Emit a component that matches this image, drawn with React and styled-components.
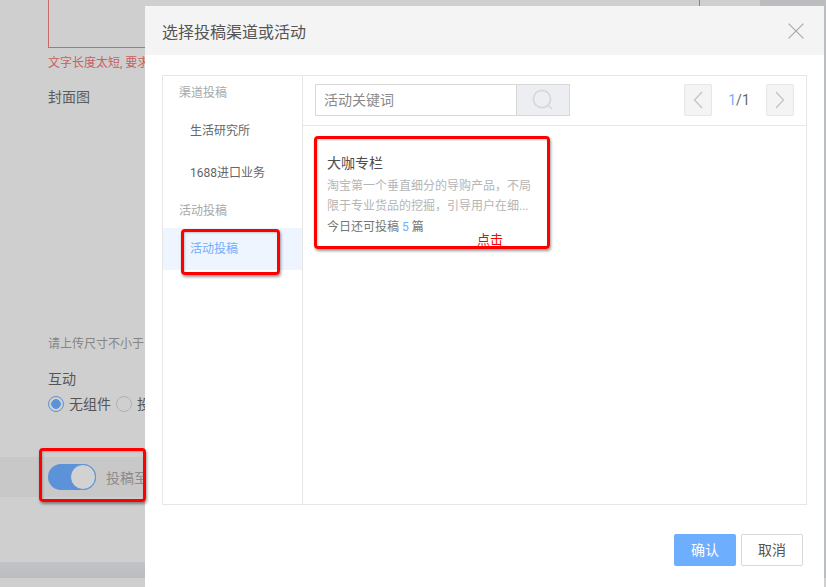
import React from "react";
import styled, { createGlobalStyle } from "styled-components";

const FONT = `Roboto, "Noto Sans CJK SC", sans-serif`;
const BLUE = "#6eaeff";
const RED = "#fe0000";

const Global = createGlobalStyle`
  html, body {
    margin: 0;
    padding: 0;
    height: 100%;
    overflow: hidden;
    font-family: ${FONT};
  }
`;

function Search() {
  return (
    <svg width="24" height="24" viewBox="0 0 24 24" fill="none" stroke="#d6d7d9" strokeWidth="1.6">
      <circle cx="11" cy="11" r="8.6" />
      <path d="M17.5 17.5 L21 21" />
    </svg>
  );
}

function Chevron({ dir }) {
  return (
    <svg width="10" height="18" viewBox="0 0 10 18" fill="none" stroke="#c4c4c4" strokeWidth="1.3">
      <path d={dir === "left" ? "M9 1 L1.5 9 L9 17" : "M1 1 L8.5 9 L1 17"} />
    </svg>
  );
}

export default function App() {
  return (
    <>
      <Global />
      <Page>
        <Back>
          <ErrorBox />
          <ErrorText>文字长度太短, 要求</ErrorText>
          <FieldLabel>封面图</FieldLabel>
          <Hint>请上传尺寸不小于</Hint>
          <GroupLabel>互动</GroupLabel>
          <RadioRow>
            <Radio $on />
            <RadioText>无组件</RadioText>
            <Radio />
            <RadioText>投票</RadioText>
          </RadioRow>
          <SwitchBand>
            <Switch>
              <Knob />
            </Switch>
            <SwitchText>投稿至</SwitchText>
          </SwitchBand>
        </Back>
        <FooterBand />
        <SideStrip />

        <Modal>
          <ModalHeader>
            <ModalTitle>选择投稿渠道或活动</ModalTitle>
            <Close>
              <svg width="16" height="16" viewBox="0 0 16 16" stroke="#a9a9a9" strokeWidth="1.2">
                <path d="M.6.6 15.4 15.4M15.4.6.6 15.4" />
              </svg>
            </Close>
          </ModalHeader>
          <Panel>
            <Sidebar>
              <SideGroup>渠道投稿</SideGroup>
              <SideItem>生活研究所</SideItem>
              <SideItem>1688进口业务</SideItem>
              <SideGroup>活动投稿</SideGroup>
              <SideItem $active>活动投稿</SideItem>
            </Sidebar>
            <Main>
              <Toolbar>
                <SearchField>
                  <SearchInput>活动关键词</SearchInput>
                  <SearchButton>
                    <Search />
                  </SearchButton>
                </SearchField>
                <Pager>
                  <PageButton>
                    <Chevron dir="left" />
                  </PageButton>
                  <PageCount>
                    <b>1</b>/1
                  </PageCount>
                  <PageButton>
                    <Chevron dir="right" />
                  </PageButton>
                </Pager>
              </Toolbar>
              <CardList>
                <Card>
                  <CardTitle>大咖专栏</CardTitle>
                  <CardDesc>淘宝第一个垂直细分的导购产品，不局限于专业货品的挖掘，引导用户在细...</CardDesc>
                  <CardQuota>
                    今日还可投稿 <b>5</b> 篇
                  </CardQuota>
                </Card>
              </CardList>
            </Main>
          </Panel>
          <ModalFooter>
            <Confirm>确认</Confirm>
            <Cancel>取消</Cancel>
          </ModalFooter>
        </Modal>

        <Mark $x={181} $y={229} $w={99} $h={46} />
        <Mark $x={314} $y={136} $w={236} $h={113} />
        <Mark $x={39} $y={448} $w={107} $h={54} />
        <ClickNote>点击</ClickNote>
      </Page>
    </>
  );
}

const Page = styled.div`
  position: relative;
  width: 826px;
  height: 587px;
  overflow: hidden;
  background: #cfcfcf;
`;

const Back = styled.div`
  display: flex;
  flex-direction: column;
  align-items: flex-start;
  padding-left: 48px;
  white-space: nowrap;
`;

const ErrorBox = styled.div`
  box-sizing: border-box;
  width: 652px;
  height: 48px;
  border: 1px solid #c76a6a;
  border-top: none;
`;

const ErrorText = styled.div`
  margin-top: 7px;
  font-size: 12px;
  line-height: 16px;
  color: #c96060;
`;

const FieldLabel = styled.div`
  margin-top: 16px;
  font-size: 14px;
  line-height: 20px;
  color: #5c5c5c;
`;

const Hint = styled.div`
  margin-top: 229px;
  font-size: 12px;
  line-height: 16px;
  color: #858585;
`;

const GroupLabel = styled.div`
  margin-top: 17px;
  font-size: 14px;
  line-height: 20px;
  color: #555;
`;

const RadioRow = styled.div`
  display: flex;
  align-items: center;
  margin-top: 5px;
`;

const Radio = styled.span`
  box-sizing: border-box;
  width: 16px;
  height: 16px;
  border-radius: 50%;
  border: 1px solid ${({ $on }) => ($on ? "#5b92d8" : "#b0b0b0")};
  background: ${({ $on }) => ($on ? "radial-gradient(circle, #5b92d8 0 4.5px, transparent 5px)" : "transparent")};
`;

const RadioText = styled.span`
  margin: 0 5px;
  font-size: 14px;
  line-height: 20px;
  color: #555;
`;

const SwitchBand = styled.div`
  display: flex;
  align-items: center;
  align-self: stretch;
  box-sizing: border-box;
  margin: 43px 0 0 -48px;
  padding-left: 48px;
  height: 40px;
  background: #c8c8c8;
`;

const Switch = styled.div`
  display: flex;
  justify-content: flex-end;
  box-sizing: border-box;
  width: 48px;
  height: 26px;
  border-radius: 13px;
  background: #5b92d8;
`;

const Knob = styled.span`
  box-sizing: border-box;
  width: 26px;
  height: 26px;
  border-radius: 50%;
  border: 1px solid #5b92d8;
  background: #d2d2d2;
`;

const SwitchText = styled.span`
  margin-left: 10px;
  font-size: 14px;
  color: #8c8c8c;
`;

const FooterBand = styled.div`
  position: absolute;
  left: 0;
  right: 0;
  top: 562px;
  height: 16px;
  background: linear-gradient(#c2c3c7, #bcbdc1);
`;

const SideStrip = styled.div`
  position: absolute;
  top: 0;
  bottom: 9px;
  right: 0;
  width: 66px;
  background: #bcbdc1;
`;

const Modal = styled.div`
  position: absolute;
  left: 145px;
  top: 6px;
  width: 679px;
  height: 590px;
  display: flex;
  flex-direction: column;
  background: #fff;
  border-radius: 2px;
`;

const ModalHeader = styled.div`
  display: flex;
  align-items: center;
  justify-content: space-between;
  flex: none;
  height: 49px;
  padding: 0 20px 0 17px;
  background: #f4f4f4;
`;

const ModalTitle = styled.div`
  font-size: 16px;
  color: #555;
`;

const Close = styled.div`
  display: flex;
`;

const Panel = styled.div`
  display: flex;
  flex: none;
  box-sizing: border-box;
  width: 645px;
  height: 430px;
  margin: 20px 0 0 17px;
  border: 1px solid #e6e6e6;
`;

const Sidebar = styled.div`
  display: flex;
  flex-direction: column;
  flex: none;
  width: 139px;
  border-right: 1px solid #e6e6e6;
  font-size: 12px;
`;

const SideGroup = styled.div`
  box-sizing: border-box;
  height: 34px;
  padding: 1px 0 0 16px;
  line-height: 33px;
  color: #a8a8a8;
`;

const SideItem = styled.div`
  box-sizing: border-box;
  height: 42px;
  padding: 1px 0 0 27px;
  line-height: 41px;
  color: ${({ $active }) => ($active ? BLUE : "#666")};
  background: ${({ $active }) => ($active ? "#eef5fe" : "transparent")};
`;

const Main = styled.div`
  display: flex;
  flex-direction: column;
  flex: 1;
`;

const Toolbar = styled.div`
  display: flex;
  align-items: center;
  justify-content: space-between;
  flex: none;
  height: 48px;
  padding: 0 12px 1px;
  border-bottom: 1px solid #e6e6e6;
`;

const SearchField = styled.div`
  display: flex;
  box-sizing: border-box;
  width: 255px;
  height: 32px;
  border: 1px solid #d8d8d8;
`;

const SearchInput = styled.div`
  flex: 1;
  padding-left: 8px;
  font-size: 14px;
  line-height: 30px;
  color: #8a8a8a;
`;

const SearchButton = styled.div`
  display: flex;
  align-items: center;
  justify-content: center;
  box-sizing: border-box;
  width: 53px;
  background: #eceef1;
  border-left: 1px solid #d8d8d8;
`;

const Pager = styled.div`
  display: flex;
  align-items: center;
`;

const PageButton = styled.div`
  display: flex;
  align-items: center;
  justify-content: center;
  box-sizing: border-box;
  width: 28px;
  height: 32px;
  background: #f4f4f4;
  border: 1px solid #e6e6e6;
  border-radius: 2px;
`;

const PageCount = styled.div`
  width: 54px;
  text-align: center;
  font-size: 14px;
  color: #666;

  b {
    font-weight: 400;
    color: ${BLUE};
  }
`;

const CardList = styled.div`
  padding: 12px;
`;

const Card = styled.div`
  box-sizing: border-box;
  width: 232px;
  height: 110px;
  padding: 15px 12px 0;
`;

const CardTitle = styled.div`
  font-size: 14px;
  line-height: 20px;
  color: #4d4d4d;
`;

const CardDesc = styled.div`
  margin-top: 3px;
  font-size: 12px;
  line-height: 20px;
  color: #b5b5b5;
`;

const CardQuota = styled.div`
  margin-top: 2px;
  font-size: 12px;
  line-height: 18px;
  color: #777;

  b {
    font-weight: 400;
    color: ${BLUE};
  }
`;

const ModalFooter = styled.div`
  display: flex;
  justify-content: flex-end;
  gap: 5px;
  margin: 29px 21px 0 0;
`;

const Confirm = styled.div`
  width: 62px;
  height: 32px;
  border-radius: 2px;
  background: ${BLUE};
  color: #fff;
  font-size: 14px;
  line-height: 32px;
  text-align: center;
`;

const Cancel = styled.div`
  box-sizing: border-box;
  width: 62px;
  height: 32px;
  border: 1px solid #d8d8d8;
  border-radius: 2px;
  color: #555;
  font-size: 14px;
  line-height: 30px;
  text-align: center;
`;

const Mark = styled.div`
  position: absolute;
  left: ${({ $x }) => $x}px;
  top: ${({ $y }) => $y}px;
  width: ${({ $w }) => $w}px;
  height: ${({ $h }) => $h}px;
  box-sizing: border-box;
  border: 3px solid ${RED};
  border-radius: 4px;
  box-shadow: 1px 2px 3px rgba(0, 0, 0, 0.4), inset 1px 1px 2px rgba(0, 0, 0, 0.2);
`;

const ClickNote = styled.div`
  position: absolute;
  left: 477px;
  top: 232px;
  font-size: 13px;
  line-height: 16px;
  color: ${RED};
`;
